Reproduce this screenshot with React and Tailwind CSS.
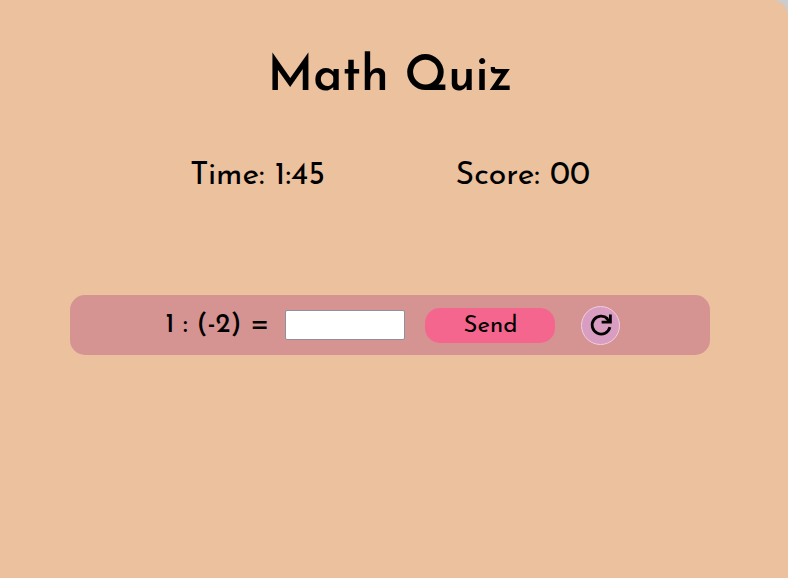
function ReloadIcon() {
  return (
    <svg viewBox="0 0 24 24" className="size-6" fill="none" stroke="currentColor" strokeWidth="2.8" aria-hidden="true">
      <path d="M20.9 14.2A9 9 0 1 1 18.6 5.8" />
      <path d="M21.4 1.5V9.2H12.6" />
      <path d="M17 4.8L20.6 8.4" />
    </svg>
  );
}

export default function App() {
  return (
    <div className="min-h-screen bg-[#cccccc] font-['Josefin_Sans','Lato',sans-serif] text-black">
      <main className="min-h-screen rounded-tr-2xl bg-[#ebc19e] pt-12 pr-2">
        <h1 className="text-center text-[49px] leading-[60px] font-semibold">Math Quiz</h1>
        <div className="mx-auto mt-[38px] flex max-w-[400px] justify-between text-[32px] leading-[60px]">
          <p>Time: 1:45</p>
          <p>Score: 00</p>
        </div>
        <form
          className="mx-auto mt-[89px] flex min-h-[60px] max-w-[640px] items-center justify-center rounded-[15px] bg-[#d59392]"
          onSubmit={(event) => event.preventDefault()}
        >
          <label htmlFor="answer" className="mr-4 pt-0.5 pl-1.5 text-[27px] leading-8 font-medium whitespace-pre">
            1 : (-2) =
          </label>
          <input
            id="answer"
            type="text"
            className="mr-5 h-[30px] w-[120px] rounded-xs border border-[#8f8f9d] bg-white px-1 text-xl outline-none"
          />
          <button type="submit" className="mr-[26px] h-[35px] w-[130px] rounded-[15px] bg-[#f5668f] pt-0.5 text-2xl">
            Send
          </button>
          <button
            type="button"
            aria-label="New question"
            className="flex size-[39px] items-center justify-center rounded-full border border-[#edcfe0] bg-[#d99dc2]"
          >
            <ReloadIcon />
          </button>
        </form>
      </main>
    </div>
  );
}
